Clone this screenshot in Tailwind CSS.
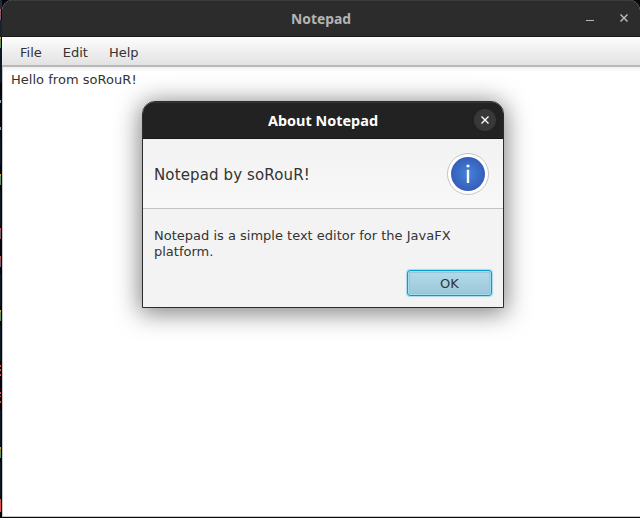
<!DOCTYPE html>
<html lang="en">
<head>
<meta charset="utf-8">
<title>Notepad</title>
<script src="https://cdn.jsdelivr.net/npm/@tailwindcss/browser@4"></script>
</head>
<body class="w-[640px] h-[518px] overflow-hidden bg-[#05080d] text-[#333333] font-['DejaVu_Sans',sans-serif]">
<div class="relative flex w-[640px] h-[518px] bg-[#05080d] overflow-hidden">
  <!-- sliver of the window behind -->
  <svg class="w-[2px] h-[518px] shrink-0" viewBox="0 0 2 518" shape-rendering="crispEdges">
    <rect width="2" height="518" fill="#02050b"/>
    <g fill="#0b1722"><rect y="0" width="2" height="9" fill="#252c36"/><rect y="20" width="2" height="17" fill="#1b222d"/><rect y="48" width="2" height="35"/><rect y="137" width="1" height="28"/><rect y="190" width="1" height="35"/><rect y="274" width="1" height="32"/><rect y="325" width="1" height="36"/><rect y="410" width="1" height="35"/><rect y="462" width="1" height="34"/></g>
    <g fill="#865770"><rect y="9" width="1" height="11"/><rect y="228" width="1" height="11"/><rect y="256" width="1" height="11"/></g>
    <g fill="#e0504f"><rect y="9" width="1" height="2"/><rect y="228" width="1" height="2"/><rect y="256" width="1" height="2"/><rect y="365" width="1" height="2"/><rect y="369" width="1" height="2"/><rect y="374" width="1" height="2"/><rect y="392" width="1" height="2"/><rect y="396" width="1" height="1"/><rect y="401" width="1" height="2"/><rect y="499" width="1" height="13"/></g>
    <g fill="#658f60"><rect y="37" width="1" height="11"/><rect y="174" width="1" height="11"/><rect y="310" width="1" height="11"/><rect y="447" width="1" height="11"/></g>
    <g fill="#dfa32c"><rect y="37" width="1" height="2"/><rect y="174" width="1" height="2"/><rect y="310" width="1" height="2"/><rect y="447" width="1" height="2"/></g>
    <g fill="#8ba3b9"><rect y="100" width="1" height="3"/><rect y="127" width="1" height="3"/></g>
  </svg>
  <main class="flex flex-col w-[638px] h-[517px] bg-white rounded-t-[11px] overflow-hidden border-b border-[#c8c8c8]">
    <header class="flex items-center h-[37px] shrink-0 bg-[#2c2c2c] border-t border-t-[#3b3b3b] border-b border-b-[#191919]">
      <div class="w-[575px] pl-[62px] text-center">
        <svg class="w-[62px] h-[24px] mx-auto block" viewBox="0 0 62 24"><text x="1" y="17" textLength="60" lengthAdjust="spacingAndGlyphs" fill="#b4b4b4" font-size="14" font-weight="700" font-family="'Noto Sans',sans-serif">Notepad</text></svg>
      </div>
      <svg class="w-[63px] h-[35px]" viewBox="0 0 63 35" fill="none" stroke="#b8b8b8"><path d="M9 19.5h8"/><path d="M43.5 13.5l7 7m0-7l-7 7" stroke-width="1.5"/></svg>
    </header>
    <nav class="flex items-center gap-[21px] h-[30px] shrink-0 pl-[18px] pt-[3px] text-[13px] bg-linear-to-b from-[#fdfdfd] to-[#e2e2e2] border-b-2 border-[#b8b8b8]">
      <span>File</span><span>Edit</span><span>Help</span>
    </nav>
    <section class="grow pl-[8px] pt-[5px] text-[13px] leading-[15px] bg-linear-to-b from-[#f0f0f0] to-white to-[5px] border-l border-[#c8c8c8]"><span class="tracking-[0.03px]">Hello from soRouR!</span></section>
  </main>

  <div class="absolute left-[142px] top-[101px] w-[362px] h-[207px] flex flex-col bg-[#f3f3f3] border border-[#2b2b2b] rounded-t-[13px] shadow-[0_3px_24px_2px_rgba(0,0,0,0.5)] overflow-hidden">
    <header class="flex items-center h-[37px] shrink-0 bg-[#222222] border-t border-t-[#353535] border-b border-b-[#171717] pl-[125px]">
      <svg class="w-[112px] h-[24px]" viewBox="0 0 112 24"><text x="0" y="17" textLength="110" lengthAdjust="spacingAndGlyphs" fill="#ffffff" font-size="14" font-weight="700" font-family="'Noto Sans',sans-serif">About Notepad</text></svg>
      <svg class="w-[22px] h-[22px] ml-[94px] -mt-[2px]" viewBox="0 0 22 22"><circle cx="11" cy="11" r="11" fill="#383838"/><path d="M7.5 7.5l7 7m0-7l-7 7" stroke="#fff" stroke-width="1.4"/></svg>
    </header>
    <div class="flex items-center justify-between h-[70px] shrink-0 pl-[11px] pr-[14px] bg-linear-to-b from-[#f2f2f2] to-[#f8f8f8] border-b border-[#c4c4c4]">
      <span class="text-[15px] leading-[18px] pt-[2px] tracking-[0.13px]">Notepad by soRouR!</span>
      <svg class="w-[42px] h-[42px]" viewBox="0 0 42 42">
        <defs><radialGradient id="blue"><stop offset="0" stop-color="#4585d7"/><stop offset="1" stop-color="#355dbb"/></radialGradient></defs>
        <circle cx="21" cy="21" r="20.5" fill="#fff" stroke="#c5c5c5"/><circle cx="21" cy="21" r="17" fill="url(#blue)"/>
        <path d="M19.6 11.8h2.8v2.5h-2.8zM19.8 16.8h2.4v13.2h-2.4z" fill="#fff"/>
      </svg>
    </div>
    <p class="pl-[11px] pt-[19px] text-[13px] leading-[16px]">Notepad is a simple text editor for the JavaFX<br>platform.</p>
    <button class="self-end mr-[11px] mt-[10px] w-[85px] h-[26px] shrink-0 rounded-[3px] border border-[#039ed3] bg-linear-to-b from-[#b3dbea] to-[#9bc6da] text-[13px] leading-[25px] shadow-[0_0_1px_1px_rgba(3,158,211,0.3),inset_0_0_0_1px_#a6dbed,inset_0_0_0_2px_#9ac6d8]">OK</button>
  </div>
</div>
</body>
</html>
